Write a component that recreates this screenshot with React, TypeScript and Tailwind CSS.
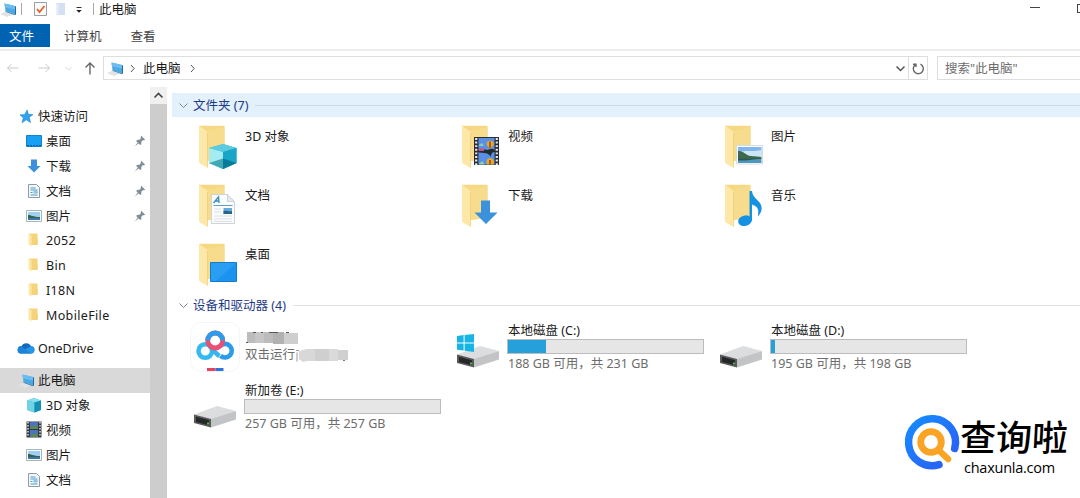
import type { ReactNode } from 'react';

type FolderKind = 'cube' | 'video' | 'image' | 'doc' | 'download' | 'music' | 'desktop';

interface NavItem {
  label: string;
  icon: ReactNode;
  pinned?: boolean;
}

interface Drive {
  name: string;
  info: string;
  used: number;
  system?: boolean;
}

function PcIcon({ className = '' }: { className?: string }) {
  return (
    <svg viewBox="0 0 17 15" className={`h-[15px] w-[17px] shrink-0 ${className}`}>
      <path d="M0 12 6 9.500l7 3-6 2.500z" fill="#dfe3e6" />
      <path d="M4.5 1.5 15 4V12.500L5.500 9z" fill="#49a9e4" />
      <path d="M4.500 1.500 15 4V7.500L5 5.500z" fill="#6cbcf0" />
      <path d="M15 4 16 4.500v8l-1 .5z" fill="#28679b" />
      <path d="M5.500 9 15 12.500v.8L5.500 9.800z" fill="#316d9b" />
    </svg>
  );
}

function Chevron({ dir, className = '' }: { dir: 'up' | 'down' | 'right'; className?: string }) {
  const paths = { up: 'M1.500 7.500l4-4 4 4', down: 'M1.500 3.500l4 4 4-4', right: 'M4 2l3.200 3.500L4 9' };
  return (
    <svg viewBox="0 0 11 11" className={`h-[11px] w-[11px] shrink-0 ${className}`} fill="none" stroke="currentColor">
      <path d={paths[dir]} />
    </svg>
  );
}

function StarIcon() {
  return (
    <svg viewBox="0 0 15 15" className="h-[15px] w-[15px] shrink-0">
      <path
        d="M8.200 1 9.300 5.300 14 5.500 10.300 8.300 11.500 13.500 7.300 10.800 3 13.700 4.300 8.800 1 5.900 5.700 5.500z"
        fill="#2ea3ee"
        stroke="#1d83cf"
        strokeWidth=".6"
      />
    </svg>
  );
}

function DesktopIcon() {
  return (
    <svg viewBox="0 0 16 14" className="h-[14px] w-4 shrink-0">
      <path d="M.5 1.500h15v11H.5z" fill="#18a0f5" stroke="#1781ce" />
      <path d="M1 11.500h14" stroke="#0c62a8" strokeDasharray="2 1" />
    </svg>
  );
}

function DownloadIcon() {
  return (
    <svg viewBox="0 0 16 16" className="h-4 w-4 shrink-0">
      <path d="M5 1.500h6V8h3.500L8 14.500 1.500 8H5z" fill="#3b91db" />
    </svg>
  );
}

function DocIcon() {
  return (
    <svg viewBox="0 0 16 16" className="h-4 w-4 shrink-0">
      <path d="M2.500 1.500h8l3 3v10h-11z" fill="#f4f8fa" stroke="#8d9ba5" />
      <path d="M4.500 5h5M4.500 7h7M8 9.500h3.500M4.500 9.500h2M4.500 12h7" stroke="#4b9ac8" />
      <path d="M7.500 7.500h4v3h-4z" fill="#8dc3e2" />
    </svg>
  );
}

function ImageIcon() {
  return (
    <svg viewBox="0 0 16 14" className="h-[14px] w-4 shrink-0">
      <path d="M.5 1.500h15v11H.5z" fill="#fff" stroke="#a4b4c0" />
      <path d="M2 3h12v8H2z" fill="#9fd0f2" />
      <path d="M2 6c3 0 5 2 12 2v1.500H2z" fill="#34614f" />
      <path d="M2 9h12v2H2z" fill="#3b78a8" />
    </svg>
  );
}

function VideoIcon() {
  return (
    <svg viewBox="0 0 16 17" className="h-[17px] w-4 shrink-0">
      <path d="M.5.5h15v16H.5z" fill="#38393d" />
      <path d="M4 1h8v7H4zM4 9h8v7H4z" fill="#4a73c4" />
      <path d="M4 6l5-2 3 2v2H4zM5 14l4-2 3 2v2H5z" fill="#5d8755" />
      <path d="M2 1v15M14 1v15" stroke="#d8dce0" strokeWidth="1.500" strokeDasharray="1.500 1.500" />
    </svg>
  );
}

function CubeIcon() {
  return (
    <svg viewBox="0 0 16 16" className="h-4 w-4 shrink-0">
      <path d="M1 3.500 8 1l7 2.500v9.500L8.500 15.500 1 13z" fill="#27b1cf" />
      <path d="M1 3.500 8 1l7 2.500L8.500 5.500z" fill="#8bdfec" />
      <path d="M1 3.500l7.500 2v10L1 13z" fill="#6fd3e4" />
      <path d="M8.500 5.500 15 3.500V13l-6.500 2.500z" fill="#1391b4" />
    </svg>
  );
}

function SmallFolderIcon() {
  return (
    <svg viewBox="0 0 16 16" className="h-4 w-4 shrink-0">
      <path d="M3 1.500h8.500V13H5z" fill="#f5d37a" />
      <path d="M2.500 1.500 5.500 3v11.500l-3-2z" fill="#fde7a6" />
      <path d="M10 12.500h1.500V5" fill="#efca68" />
    </svg>
  );
}

function OneDriveIcon() {
  return (
    <svg viewBox="0 0 18 12" className="h-3 w-[18px] shrink-0">
      <path d="M4.500 4.300A5.200 5.200 0 0 1 14 4.200a3.600 3.600 0 0 1-.4 7.300H4A3.600 3.600 0 0 1 4.500 4.300z" fill="#1268bd" />
      <path d="M4.500 4.300 14 11.500H4A3.600 3.600 0 0 1 4.500 4.300z" fill="#1b84d8" />
      <path d="M8 7 14 4.200a3.600 3.600 0 0 1-.4 7.300z" fill="#2496e6" />
    </svg>
  );
}

function PinIcon() {
  return (
    <svg viewBox="0 0 12 12" className="h-3 w-3 shrink-0" fill="#7f8d99">
      <path d="M7.200.8 11.200 4.800 10 5.300 8.800 5.200 7.300 6.800 7.300 9.200 6.300 10 2.200 5.900 3 4.900 5.400 4.800 6.900 3.300 6.700 2z" />
      <path d="M4.200 7 5.200 8 .8 11.400z" />
    </svg>
  );
}

function FolderOverlay({ kind }: { kind: FolderKind }) {
  switch (kind) {
    case 'cube':
      return (
        <g>
          <path d="M12 24 26 20l13.500 4v15L26 45l-14-6z" fill="#25b4d0" />
          <path d="M12 24 26 20l13.500 4L26 28z" fill="#5ccbe0" />
          <path d="M12 24l14 4V45l-14-6z" fill="#a5ebf2" />
          <path d="M26 28 39.500 24v15L26 45z" fill="#18a6c8" />
          <path d="M12 39l14-4.500V45z" fill="#3fa9b6" />
          <path d="M26 34.500 39.500 39 26 45z" fill="#0b7b9a" />
        </g>
      );
    case 'video':
      return (
        <g>
          <path d="M14 13h25v28H14z" fill="#2b2d33" />
          <path d="M18.500 14h16v12.500h-16zM18.500 28h16v12.500h-16z" fill="#5890e8" />
          <path d="M26.500 20.500a3.700 3.700 0 0 1 7.400 0l-3 4h-1.500zM26.500 38a3.700 3.700 0 0 1 7.400 0v2.500h-7.400z" fill="#e4aa28" />
          <path d="M30 17.500v6.500M30 36v4.500" stroke="#a03e20" strokeWidth="1.500" />
          <path d="M19 27c4-1.500 5-2 9-1 2-1.500 4-1.500 6.500-.5v2.500c-2 0-3 1-4 5-1-3-3-4-11.500-4.500z" fill="#232c2d" />
          <path d="M19 24.500h5v2.500h-5z" fill="#d34c87" />
          <path d="M19 21l3-2 2 3h-5zM19 39.500l3.500-2.500 2 3.500h-5.500z" fill="#8fd0a4" />
          <path d="M16.200 14v27M36.800 14v27" stroke="#e7e9ed" strokeWidth="2.200" strokeDasharray="1.900 1.700" />
        </g>
      );
    case 'image':
      return (
        <g>
          <path d="M13.500 21.500h26v18.500h-26z" fill="#fff" stroke="#d5dde3" />
          <path d="M15 23h23.500v9H15z" fill="#7fb6ee" />
          <path d="M15 28c6-2 14 0 23.500-2v8H15z" fill="#cde5f5" />
          <path d="M15 27c5-1 8 4.500 13 5 4 .5 8 .5 10.500 1v2H15z" fill="#3d6a4c" />
          <path d="M15 35h23.500v4H15z" fill="#4f97bf" />
          <path d="M15 34.500h23.500l-16 2H15z" fill="#2d5a58" />
        </g>
      );
    case 'doc':
      return (
        <g>
          <path d="M14.500 11.500h16l7 7v22h-23z" fill="#fbfcfd" stroke="#cdd3d8" />
          <path d="M30.500 11.500v7h7z" fill="#e4e9ed" stroke="#cdd3d8" />
          <path d="M16.500 20 21.500 14l.5 6M18.500 18h4" fill="none" stroke="#3d8ec4" strokeWidth="1.400" />
          <path d="M16.500 22.500h19" stroke="#5d9fc6" />
          <path d="M26.500 25h8.500v6h-8.500z" fill="#64aade" />
          <path d="M26.500 28c3-1 5 1 8.500 0v3h-8.500z" fill="#28638b" />
          <path d="M17 26h7M17 29h7M17 33h18M17 36h18M17 38.500h18" stroke="#dcdfe2" />
        </g>
      );
    case 'download':
      return <path d="M21 17.500h9V29.500h7.500L26 41 14.500 29.500H21z" fill="#3a92dc" />;
    case 'music':
      return (
        <g fill="#1692e2">
          <ellipse cx="22" cy="37.700" rx="7" ry="5.200" transform="rotate(-14 22 37.700)" />
          <path d="M26.500 8H29c.5 8 9.500 9.500 9.700 17 0 3.500-1.700 6.500-4 8.500 2-7.500-.7-10.500-5.700-12V38h-2.500z" />
        </g>
      );
    case 'desktop':
      return (
        <g>
          <path d="M13.500 20.500h26v19h-26z" fill="#1a94f0" stroke="#147cc9" />
          <path d="M14 21h25L19 39h-5z" fill="#35a5f5" opacity=".6" />
        </g>
      );
  }
}

function FolderIcon({ kind }: { kind: FolderKind }) {
  return (
    <svg viewBox="0 0 42 46" className="h-[46px] w-[42px] shrink-0">
      <path d="M2 1.800h25.500V35L10 37z" fill="#f6d782" />
      <path d="M10 7 27.500 3v32L10 37z" fill="#f8dc8d" />
      <path d="M2 1.800 9 6.500c1 .8 1.500 1.500 1.500 3V44L3 39.500c-.7-.5-1-1-1-2z" fill="#fde8a8" />
      <path d="M10.500 9v34.500" stroke="#efcb72" strokeWidth=".7" />
      <FolderOverlay kind={kind} />
    </svg>
  );
}

function DriveIcon({ system }: { system?: boolean }) {
  return (
    <svg viewBox="0 0 44 34" className="h-[34px] w-11 shrink-0">
      <path d="M1 20.500 24 12l19 5-25 8.500z" fill="#dcddde" />
      <path d="M1 20.500 18 25v8.500L1 29z" fill="#58595a" />
      <path d="M18 25l25-8V25.500L18 33.500z" fill="#c2c4c5" />
      <path d="M3 22.800 16 26.300v5L3 28z" fill="#262728" />
      <path d="M14 28.500h2v2h-2z" fill="#53b54a" />
      {system && (
        <path
          d="M1 2 7.600 1.100V8.600H1zM8.600 1 18 0V8.600H8.600zM1 9.600h6.600v7L1 15.800zM8.600 9.600H18V18l-9.400-1.200z"
          fill="#17b4e6"
        />
      )}
    </svg>
  );
}

function CloudDiskIcon() {
  return (
    <svg viewBox="0 0 50 52" className="h-[52px] w-[50px] shrink-0" fill="none">
      <rect x=".5" y=".5" width="49" height="49" rx="10" fill="#fff" stroke="#f3f5f7" />
      <circle cx="15.300" cy="29" r="6.800" stroke="#35b9ee" strokeWidth="4.600" />
      <path d="M30 24a6.800 6.800 0 1 1 .5 9.800" stroke="#2b9cea" strokeWidth="4.600" />
      <path d="M19.500 24c3 2.500 6 7.500 10 10" stroke="#35b4ee" strokeWidth="4.600" />
      <circle cx="25.200" cy="18.500" r="7.500" stroke="#ea4f74" strokeWidth="4.800" />
      <path d="M17.700 18.500a7.500 7.500 0 0 1 15 0" stroke="#2d9bea" strokeWidth="4.800" />
      <path d="M17 47.500h8.500" stroke="#e8435e" strokeWidth="3" />
      <path d="M25.500 47.500h8" stroke="#2f74dc" strokeWidth="3" />
    </svg>
  );
}

const quickAccess: NavItem[] = [
  { label: '桌面', icon: <DesktopIcon />, pinned: true },
  { label: '下载', icon: <DownloadIcon />, pinned: true },
  { label: '文档', icon: <DocIcon />, pinned: true },
  { label: '图片', icon: <ImageIcon />, pinned: true },
  { label: '2052', icon: <SmallFolderIcon /> },
  { label: 'Bin', icon: <SmallFolderIcon /> },
  { label: 'I18N', icon: <SmallFolderIcon /> },
  { label: 'MobileFile', icon: <SmallFolderIcon /> },
];

const pcItems: NavItem[] = [
  { label: '3D 对象', icon: <CubeIcon /> },
  { label: '视频', icon: <VideoIcon /> },
  { label: '图片', icon: <ImageIcon /> },
  { label: '文档', icon: <DocIcon /> },
];

const folders: { label: string; kind: FolderKind }[] = [
  { label: '3D 对象', kind: 'cube' },
  { label: '视频', kind: 'video' },
  { label: '图片', kind: 'image' },
  { label: '文档', kind: 'doc' },
  { label: '下载', kind: 'download' },
  { label: '音乐', kind: 'music' },
  { label: '桌面', kind: 'desktop' },
];

const drives: Drive[] = [
  { name: '本地磁盘 (C:)', info: '188 GB 可用，共 231 GB', used: 19.5, system: true },
  { name: '本地磁盘 (D:)', info: '195 GB 可用，共 198 GB', used: 2 },
  { name: '新加卷 (E:)', info: '257 GB 可用，共 257 GB', used: 0 },
];

function TitleBar() {
  return (
    <div className="flex h-6 items-start">
      <PcIcon className="mt-0.5" />
      <div className="ml-1 mt-[3px] h-3 w-px bg-[#a8a8a8]" />
      <svg viewBox="0 0 13 16" className="ml-3 mt-px h-4 w-[13px]" fill="none">
        <path d="M.5 1.500h12v13H.5z" fill="#fafafa" stroke="#9a9fa5" />
        <path d="M3 8l2.500 3L10.500 5" stroke="#e2632b" strokeWidth="1.800" />
      </svg>
      <svg viewBox="0 0 11 14" className="ml-2 mt-0.5 h-[14px] w-[11px]">
        <path d="M1 1h9v12H1z" fill="#d5e1f3" />
        <path d="M1 1l2.500 1.500V14L1 12.500z" fill="#e6eef9" />
      </svg>
      <svg viewBox="0 0 8 8" className="ml-[9px] mt-1.5 h-2 w-2">
        <path d="M1.500 1.500h5" stroke="#333" />
        <path d="M1.300 4h5.400L4 6.700z" fill="#222" />
      </svg>
      <div className="ml-2.5 mt-[3px] h-3 w-px bg-[#a8a8a8]" />
      <span className="ml-[5px] pt-px leading-[18px]">此电脑</span>
      <div className="ml-auto mr-10 mt-[7px] h-px w-[10px] bg-[#444]" />
      <div className="-ml-[3px] mt-1 h-[9px] w-[3px] shrink-0 border border-r-0 border-[#444]" />
    </div>
  );
}

function AddressBar() {
  return (
    <div className="flex h-[37px] items-start pt-[5px]">
      <div className="flex h-6 w-[103px] shrink-0 items-center text-[#c9c9c9]">
        <svg viewBox="0 0 14 12" className="ml-[6px] h-3 w-[14px]" fill="none" stroke="currentColor">
          <path d="M5.500 2 1.500 6 5.500 10M1.500 6H12.500" />
        </svg>
        <svg viewBox="0 0 14 12" className="ml-[17px] h-3 w-[14px]" fill="none" stroke="currentColor">
          <path d="M8.500 2 12.500 6 8.500 10M12.500 6H1.500" />
        </svg>
        <Chevron dir="down" className="ml-3 scale-75" />
        <svg viewBox="0 0 12 14" className="ml-[10px] h-[14px] w-3 text-[#666]" fill="none" stroke="currentColor" strokeWidth="1.400">
          <path d="M1.500 6.500 6 2 10.500 6.500M6 2V13.500" />
        </svg>
      </div>
      <div className="flex h-6 w-[825px] shrink-0 items-center border border-[#dedede]">
        <PcIcon className="ml-[3px]" />
        <Chevron dir="right" className="ml-[3px] text-[#555]" />
        <span className="ml-[5px] pt-px">此电脑</span>
        <Chevron dir="right" className="ml-[6px] text-[#555]" />
        <Chevron dir="down" className="ml-auto mr-[2px] text-[#555] [stroke-width:1.500]" />
        <div className="flex h-full w-[19px] items-center justify-center border-l border-[#dedede]">
          <svg viewBox="0 0 13 13" className="h-[13px] w-[13px]" fill="none" stroke="#666" strokeWidth="1.400">
            <path d="M8.500 2.200A5 5 0 1 1 3.300 2.700M4 5V2.300H1" />
          </svg>
        </div>
      </div>
      <div className="ml-[9px] flex h-6 min-w-0 grow items-center border border-r-0 border-[#dedede] pl-[7px] pt-px text-[#6d6d6d]">
        搜索"此电脑"
      </div>
    </div>
  );
}

function NavRow({ item }: { item: NavItem }) {
  return (
    <div className="flex h-[24.8px] shrink-0 items-center pl-[26px] pr-1">
      {item.icon}
      <span className={`ml-1 pt-0.5 ${/^\w+$/.test(item.label) ? 'tracking-[0.35px]' : ''}`}>{item.label}</span>
      {item.pinned && (
        <span className="ml-auto">
          <PinIcon />
        </span>
      )}
    </div>
  );
}

function Sidebar() {
  return (
    <div className="flex w-[150px] shrink-0 flex-col overflow-hidden pt-[17px]">
      <div className="flex h-[24.8px] shrink-0 items-center pl-[19px]">
        <StarIcon />
        <span className="ml-1 pt-0.5">快速访问</span>
      </div>
      {quickAccess.map(item => (
        <NavRow key={item.label} item={item} />
      ))}
      <div className="mt-[8px] flex h-[24.8px] shrink-0 items-center pl-[17px]">
        <OneDriveIcon />
        <span className="ml-[3px] pt-0.5">OneDrive</span>
      </div>
      <div className="mt-[8px] flex h-[24.8px] shrink-0 items-center bg-[#d9d9d9] pl-[18px]">
        <PcIcon />
        <span className="ml-[3px] pt-0.5">此电脑</span>
      </div>
      {pcItems.map(item => (
        <NavRow key={item.label} item={item} />
      ))}
    </div>
  );
}

function GroupHeader({ title, active }: { title: string; active?: boolean }) {
  return (
    <div className={`flex h-6 items-center pl-[6px] text-[#1e3a86] ${active ? 'bg-[#e3f1fc]' : ''}`}>
      <Chevron dir="down" className="text-[#7a8794]" />
      <span className="ml-[4px] shrink-0 pt-px">{title}</span>
      <div className={`ml-[7px] h-px grow ${active ? 'bg-[#c9dae8]' : 'bg-[#e2e2e2]'}`} />
    </div>
  );
}

function DriveTile({ drive }: { drive: Drive }) {
  return (
    <div className="flex h-[60px]">
      <div className="w-[52px] shrink-0 pl-px pt-[12px]">
        <DriveIcon system={drive.system} />
      </div>
      <div className="w-[197px]">
        <div className="h-[17px] pl-px leading-[18px]">{drive.name}</div>
        <div className="h-[15px] border border-[#bcbcbc] bg-[#e6e6e6]">
          <div className="h-full bg-[#26a0da]" style={{ width: `${drive.used}%` }} />
        </div>
        <div className="whitespace-nowrap pl-px pt-px leading-[18px] text-[#6d6d6d]">{drive.info}</div>
      </div>
    </div>
  );
}

function CloudDiskTile() {
  return (
    <div className="flex h-[60px]">
      <div className="-ml-[2px] w-[55px] shrink-0">
        <CloudDiskIcon />
      </div>
      <div className="pt-[9px]">
        <svg viewBox="0 0 54 14" className="h-[14px] w-[54px]">
          <path d="M2 1h26v11H2z" fill="#bcbcbc" />
          <path d="M10 1h9v11h-9z" fill="#c6c6c6" />
          <path d="M28 1h11v12H28z" fill="#b1b1b1" />
          <path d="M39 2h14v11H39z" fill="#cecece" />
          <path d="M8 1.500h3M16 1.500h2M24 1.500h9M41 1.500h3M1 11.500h2" stroke="#555" />
        </svg>
        <div className="flex items-center pt-px leading-[18px] text-[#6d6d6d]">
          双击运行
          <svg viewBox="0 0 54 15" className="h-[15px] w-[54px]">
            <path d="M1 2.500h3M2 4.500v9" stroke="#999" />
            <path d="M4 3 12 1h18v12H12l-4 1-4-3z" fill="#d8d8d8" />
            <path d="M20 1h14v12H20z" fill="#cfcfcf" />
            <path d="M34 1h9v12h-9z" fill="#dadada" />
            <path d="M43 2h10v10H43z" fill="#d0d0d0" />
            <path d="M48 12.500h2" stroke="#777" />
          </svg>
        </div>
      </div>
    </div>
  );
}

function Content() {
  return (
    <div className="flex min-w-0 grow flex-col pl-[5px] pt-[6px]">
      <GroupHeader title="文件夹 (7)" active />
      <div className="grid grid-cols-[263px_263px_263px] pl-[25px] pt-[7px]">
        {folders.map(folder => (
          <div key={folder.kind} className="flex h-[58.8px]">
            <FolderIcon kind={folder.kind} />
            <span className="ml-[6px] mt-[4px] leading-[18px]">{folder.label}</span>
          </div>
        ))}
      </div>
      <div className="-mt-[7.400px]">
        <GroupHeader title="设备和驱动器 (4)" />
      </div>
      <div className="grid grid-cols-[263px_263px_263px] pl-[20px] pt-[5px]">
        <CloudDiskTile />
        {drives.map(drive => (
          <DriveTile key={drive.name} drive={drive} />
        ))}
      </div>
    </div>
  );
}

function SiteBadge() {
  return (
    <div className="absolute bottom-0 right-0 flex h-[88px] w-[176px] text-black">
      <svg viewBox="0 0 56 56" className="-ml-px mt-[4px] h-14 w-14 shrink-0 overflow-visible" fill="none" strokeLinecap="round">
        <defs>
          <linearGradient id="ring" x1="0" y1="0" x2="1" y2="1">
            <stop offset="0" stopColor="#168cff" />
            <stop offset="1" stopColor="#2b5cf5" />
          </linearGradient>
        </defs>
        <path d="M51.700 34.500A23.500 23.500 0 1 0 36 50.700" stroke="url(#ring)" strokeWidth="7.500" />
        <circle cx="28" cy="28" r="10.300" stroke="#f9a425" strokeWidth="6.800" />
        <path d="M36 36.500 45 45" stroke="#f9a425" strokeWidth="6.500" />
      </svg>
      <div className="flex flex-col">
        <span className="-skew-x-3 whitespace-nowrap pl-px pt-[6px] text-[36px] font-medium leading-[44px]">查询啦</span>
        <span className="-mt-px pl-[5px] font-['Open_Sans'] text-[14.500px] font-medium leading-[18px] tracking-[-0.250px]">
          chaxunla.com
        </span>
      </div>
    </div>
  );
}

export default function App() {
  return (
    <div className="relative flex h-[498px] w-[1080px] flex-col overflow-hidden bg-white font-['Noto_Sans','Noto_Sans_CJK_SC',sans-serif] text-[12.5px] leading-[18px] text-[#1a1a1a]">
      <TitleBar />
      <div className="flex h-[27px] items-start border-b-2 border-[#ededed]">
        <div className="flex h-[23px] w-[50px] items-center bg-[#0063b1] pl-[9px] pt-0.5 text-white">文件</div>
        <div className="flex h-[23px] items-center pl-[14px] pt-0.5 text-[#444]">计算机</div>
        <div className="flex h-[23px] items-center pl-[29px] pt-0.5 text-[#444]">查看</div>
      </div>
      <AddressBar />
      <div className="-mt-px flex min-h-0 grow">
        <Sidebar />
        <div className="flex w-[17px] shrink-0 flex-col bg-[#cdcdcd]">
          <div className="flex h-[17px] items-center justify-center bg-[#f0f0f0] text-[#444]">
            <Chevron dir="up" className="[stroke-width:1.600]" />
          </div>
        </div>
        <Content />
      </div>
      <SiteBadge />
    </div>
  );
}
